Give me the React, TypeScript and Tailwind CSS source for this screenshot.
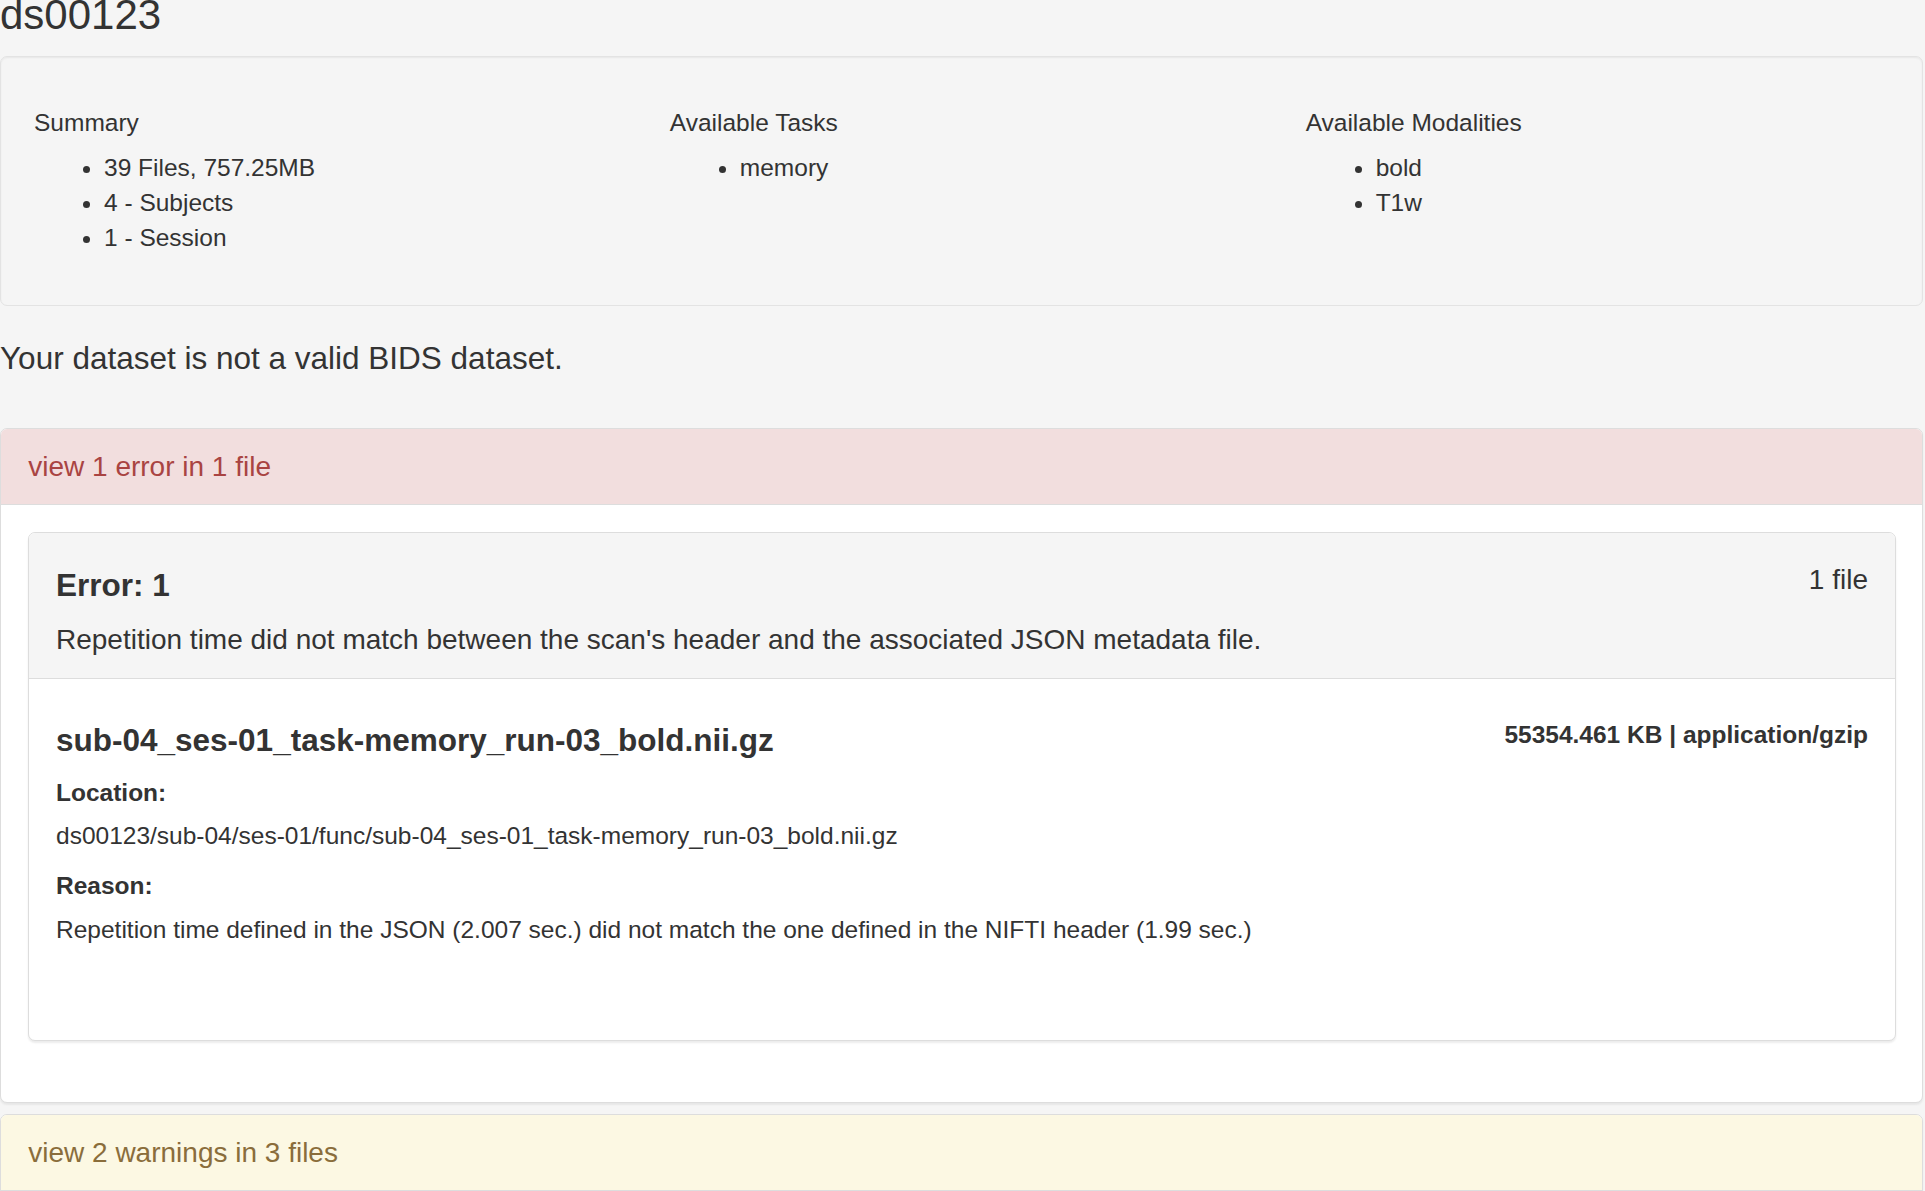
import React from "react";

const font = { fontFamily: '"Liberation Sans", Arial, Helvetica, sans-serif' };

function Column({ title, items }: { title: string; items: string[] }) {
  return (
    <div className="px-[26.25px]">
      <h5 className="text-[24.5px] leading-[1.1] font-normal mt-[20px] mb-[13.7px]">{title}</h5>
      <ul className="list-disc pl-[70px] mb-[15px] text-[24.5px] leading-[35px]">
        {items.map((it) => (
          <li key={it}>{it}</li>
        ))}
      </ul>
    </div>
  );
}

export default function App() {
  return (
    <div className="min-h-screen bg-[#f5f5f5] text-[#333] pr-[2px] overflow-hidden" style={font}>
      <h3 className="text-[42px] leading-[1.1] font-normal mt-[-8px] mb-[17.5px]">ds00123</h3>

      <div className="rounded-[7px] border border-[#e3e3e3] bg-[#f5f5f5] px-[33px] pt-[33px] pb-[35px] shadow-[inset_0_1px_2px_rgba(0,0,0,0.06)] mb-[35px]">
        <div className="grid grid-cols-3 mx-[-26.25px]">
          <Column title="Summary" items={["39 Files, 757.25MB", "4 - Subjects", "1 - Session"]} />
          <Column title="Available Tasks" items={["memory"]} />
          <Column title="Available Modalities" items={["bold", "T1w"]} />
        </div>
      </div>

      <h4 className="text-[31.5px] leading-[1.1] font-normal mt-0 mb-[52px]">
        Your dataset is not a valid BIDS dataset.
      </h4>

      <div className="rounded-[7px] border border-[#dddddd] bg-white overflow-hidden shadow-[0_2px_2px_rgba(0,0,0,0.06)]">
        <div className="bg-[#f2dede] text-[#a94442] px-[27.25px] pt-[18.5px] pb-[16.5px] border-b border-[#dddddd]">
          <span className="text-[28px] leading-[40px] block">view 1 error in 1 file</span>
        </div>
        <div className="pl-[27.25px] pr-[26.25px] pt-[27.25px] pb-[26.25px]">
          <div className="rounded-[7px] border border-[#dddddd] bg-white overflow-hidden shadow-[0_2px_2px_rgba(0,0,0,0.08)] mb-[8.75px]">
            <div className="bg-[#f5f5f5] border-b border-[#dddddd] px-[26.75px] pt-[17.5px] pb-[17.5px]">
              <div className="flex justify-between items-start">
                <h4 className="text-[31.5px] leading-[1.1] font-bold mt-[17.5px] mb-[17.5px]">Error: 1</h4>
                <span className="text-[28px] leading-[35px] mt-[11px]">1 file</span>
              </div>
              <p className="text-[28px] leading-[40px]">
                Repetition time did not match between the scan's header and the associated JSON metadata file.
              </p>
            </div>
            <div className="px-[26.75px] pt-[26.25px] pb-[92.5px] text-[24.5px] leading-[35px]">
              <div className="flex justify-between items-start">
                <h4 className="text-[31.5px] leading-[1.1] font-bold mt-[17.5px] mb-[17.5px]">
                  sub-04_ses-01_task-memory_run-03_bold.nii.gz
                </h4>
                <span className="font-bold mt-[11.5px]">55354.461 KB | application/gzip</span>
              </div>
              <div className="font-bold mb-[8.75px]">Location:</div>
              <div className="mb-[15px]">ds00123/sub-04/ses-01/func/sub-04_ses-01_task-memory_run-03_bold.nii.gz</div>
              <div className="font-bold mb-[8.75px]">Reason:</div>
              <div>
                Repetition time defined in the JSON (2.007 sec.) did not match the one defined in the NIFTI header (1.99 sec.)
              </div>
            </div>
          </div>
          <div className="h-[26.25px]" />
        </div>
      </div>

      <div className="mt-[11px] rounded-[7px] border border-[#dddddd] bg-white overflow-hidden shadow-[0_2px_2px_rgba(0,0,0,0.06)]">
        <div className="bg-[#fcf8e3] text-[#8a6d3b] px-[27.25px] pt-[18.5px] pb-[16.5px] border-b border-[#dddddd]">
          <span className="text-[28px] leading-[40px] block">view 2 warnings in 3 files</span>
        </div>
        <div className="h-[200px]" />
      </div>
    </div>
  );
}
